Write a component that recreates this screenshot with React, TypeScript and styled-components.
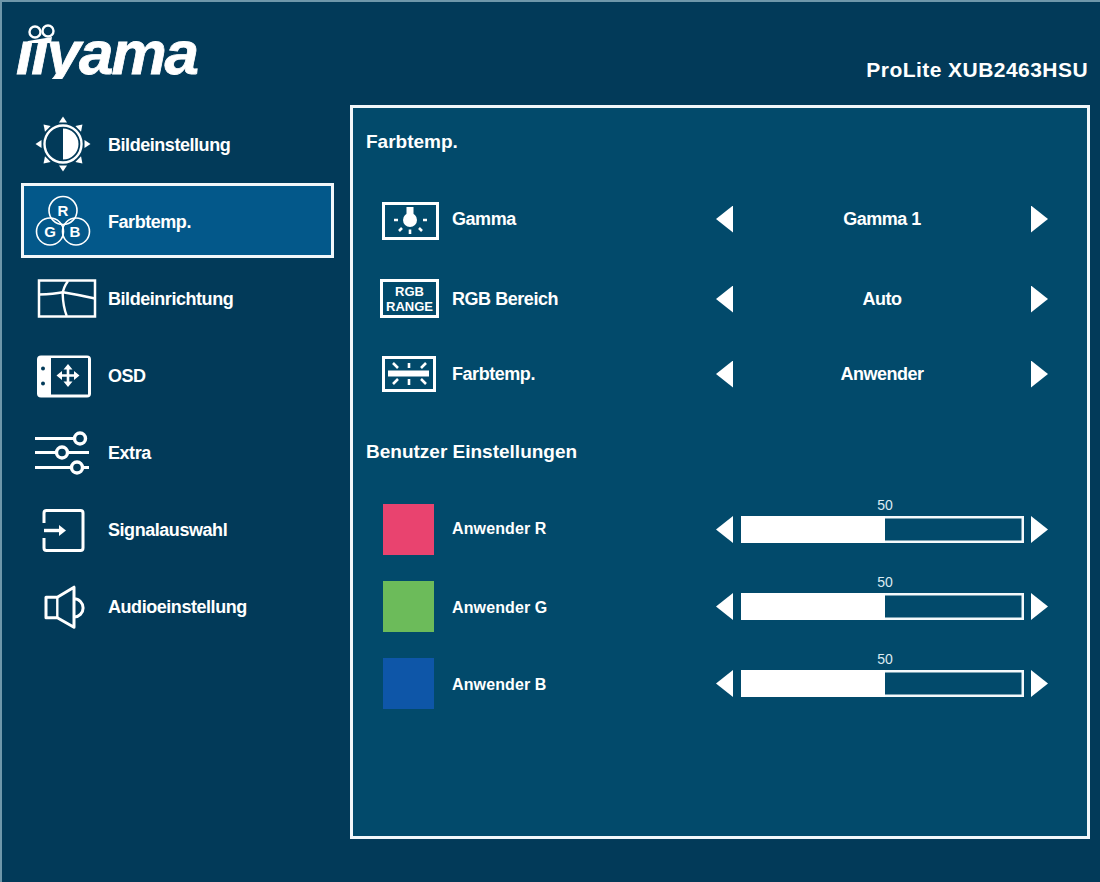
import React from 'react';
import styled, { createGlobalStyle } from 'styled-components';

const FRAME_BG = '#023a59';
const PANEL_BG = '#024a6b';
const ACTIVE_BG = '#03588a';

const GlobalStyle = createGlobalStyle`
  html, body {
    margin: 0;
    padding: 0;
    background: ${FRAME_BG};
  }
  * {
    box-sizing: border-box;
  }
`;

const Frame = styled.div`
  width: 1100px;
  height: 882px;
  overflow: hidden;
  display: flex;
  flex-direction: column;
  background: ${FRAME_BG};
  border-left: 2px solid #6f97aa;
  border-top: 2px solid #6f97aa;
  font-family: "Liberation Sans", Arial, sans-serif;
  color: #fff;
`;

const Header = styled.header`
  height: 103px;
  flex: none;
  display: flex;
  justify-content: space-between;
  align-items: flex-start;
  padding-left: 14px;
  padding-right: 12px;
`;

const Logo = styled.div`
  position: relative;
  margin-top: 20px;
  font-size: 62px;
  line-height: 62px;
  font-weight: 700;
  font-style: italic;
  letter-spacing: -2px;
  padding-right: 4px;
  -webkit-text-stroke: 0.8px #fff;
`;

/* sits on the wordmark: swaps the i dots for the infinity sign, shortens the y tail */
const LogoMark = styled.svg`
  position: absolute;
  left: 0;
  top: 0;
`;

const Model = styled.div`
  margin-top: 55px;
  font-size: 21px;
  line-height: 26px;
  font-weight: 700;
  letter-spacing: 0.45px;
`;

const Body = styled.div`
  flex: 1;
  display: flex;
  align-items: flex-start;
  padding-left: 19px;
  gap: 16px;
`;

const Sidebar = styled.nav`
  width: 313px;
  padding-top: 1px;
  display: flex;
  flex-direction: column;
  gap: 2px;
`;

const NavItem = styled.div<{ $active?: boolean }>`
  height: 75px;
  display: flex;
  align-items: center;
  padding-left: 6px;
  border: 3px solid ${(p) => (p.$active ? '#f2f7fa' : 'transparent')};
  background: ${(p) => (p.$active ? ACTIVE_BG : 'transparent')};
`;

const NavLabel = styled.span`
  margin-left: 8px;
  padding-top: 2px;
  font-size: 18px;
  line-height: 24px;
  font-weight: 700;
  letter-spacing: -0.45px;
`;

const Panel = styled.section`
  width: 740px;
  height: 734px;
  border: 3px solid #f2f7fa;
  background: ${PANEL_BG};
  padding-top: 22px;
  padding-left: 13px;
  padding-right: 39px;
  display: flex;
  flex-direction: column;
`;

const SectionTitle = styled.h2<{ $top?: number }>`
  margin: ${(p) => p.$top ?? 0}px 0 0;
  font-size: 19px;
  line-height: 24px;
  font-weight: 700;
`;

const Row = styled.div<{ $top: number; $height: number }>`
  margin-top: ${(p) => p.$top}px;
  height: ${(p) => p.$height}px;
  display: grid;
  grid-template-columns: 12px 74px 1fr 332px;
  grid-template-rows: minmax(0, 1fr);
  align-items: center;
`;

const IconSlot = styled.div`
  grid-column: 2;
  height: 100%;
`;

const OverflowSvg = styled.svg`
  display: block;
  overflow: visible;
  flex: none;
`;

const Swatch = styled.div<{ $color: string }>`
  width: 51px;
  height: 51px;
  margin-left: 5px;
  background: ${(p) => p.$color};
`;

const RowLabel = styled.span`
  font-size: 18px;
  line-height: 24px;
  font-weight: 700;
  letter-spacing: -0.45px;
`;

const SmallLabel = styled.span<{ $drop: boolean }>`
  padding-${(p) => (p.$drop ? 'top' : 'bottom')}: 2px;
  font-size: 16px;
  line-height: 24px;
  font-weight: 700;
  letter-spacing: 0.12px;
`;

const Selector = styled.div`
  display: flex;
  align-items: center;
  justify-content: space-between;
`;

const Arrow = styled.span<{ $dir: 'left' | 'right' }>`
  width: 17px;
  height: 27px;
  flex: none;
  background: #fff;
  clip-path: ${(p) =>
    p.$dir === 'left'
      ? 'polygon(100% 0, 100% 100%, 0 50%)'
      : 'polygon(0 0, 0 100%, 100% 50%)'};
`;

const SelectorValue = styled.span`
  font-size: 18px;
  line-height: 24px;
  font-weight: 700;
  letter-spacing: -0.5px;
`;

const Slider = styled.div`
  align-self: stretch;
  min-height: 0;
  display: flex;
  flex-direction: column;
  justify-content: flex-end;
  padding-bottom: 12px;
`;

const SliderValue = styled.div`
  flex: none;
  height: 12px;
  margin-bottom: 5px;
  margin-left: 6px;
  text-align: center;
  font-size: 14px;
  line-height: 12px;
  color: #dcebf2;
`;

const SliderBar = styled.div`
  flex: none;
  display: flex;
  align-items: center;
  justify-content: space-between;
`;

const Track = styled.div`
  width: 283px;
  height: 27px;
  box-shadow: inset 0 0 0 2.5px #f4f9fb;
  margin-left: 7px;
  margin-right: 7px;
`;

const TrackFill = styled.div`
  height: 100%;
  background: #fff;
`;

const InfinityMark = () => (
  <LogoMark width="190" height="72" viewBox="0 0 190 72">
    <rect x="0" y="0" width="70" height="18.5" fill={FRAME_BG} />
    <rect x="0" y="57" width="190" height="15" fill={FRAME_BG} />
    <circle cx="19" cy="10" r="5.5" fill="none" stroke="#fff" strokeWidth="2.4" />
    <circle cx="32" cy="9" r="5.5" fill="none" stroke="#fff" strokeWidth="2.4" />
    <path d="M12 19 L36 15 L35 21 L11 21 Z" fill="#fff" />
  </LogoMark>
);

const NavSvg: React.FC<{ children: React.ReactNode }> = ({ children }) => (
  <OverflowSvg width="70" height="60" viewBox="0 0 70 60" fill="none" stroke="#fff" strokeWidth="3">
    {children}
  </OverflowSvg>
);

const SunIcon = () => (
  <NavSvg>
    <circle cx="33" cy="30" r="18.5" strokeWidth="2.4" />
    <path d="M33 14.5 A15.5 15.5 0 0 1 33 45.5 Z" fill="#fff" stroke="none" />
    {[0, 45, 90, 135, 180, 225, 270, 315].map((a) => (
      <polygon
        key={a}
        points="29,8.5 37,8.5 33,2.5"
        fill="#fff"
        stroke="none"
        transform={`rotate(${a} 33 30)`}
      />
    ))}
  </NavSvg>
);

const LetterText = styled.text`
  font-family: "Liberation Sans", Arial, sans-serif;
  font-size: 15px;
  font-weight: 700;
  fill: #fff;
  stroke: none;
  text-anchor: middle;
`;

const RgbIcon = () => (
  <NavSvg>
    <g strokeWidth="1.6">
      <circle cx="33" cy="19.5" r="14" />
      <circle cx="20" cy="40.5" r="13.5" />
      <circle cx="46" cy="40.5" r="13.5" />
    </g>
    <LetterText x="33" y="25">R</LetterText>
    <LetterText x="20" y="46">G</LetterText>
    <LetterText x="45" y="46">B</LetterText>
  </NavSvg>
);

const GeometryIcon = () => (
  <NavSvg>
    <rect x="9" y="12.5" width="56" height="36" strokeWidth="2.5" />
    <path d="M9 26.5 Q24 26 33 24.2 Q50 27 65 30.5" strokeWidth="2.4" />
    <path d="M38 13 Q33 20 32.7 26 Q33 38 36.7 48" strokeWidth="2.4" />
  </NavSvg>
);

const OsdIcon = () => (
  <NavSvg>
    <rect x="7" y="10.5" width="54" height="42" rx="4" fill="#fff" stroke="none" />
    <rect x="21" y="13" width="37" height="36.5" fill={FRAME_BG} stroke="none" />
    <circle cx="13" cy="23.5" r="2" fill={FRAME_BG} stroke="none" />
    <circle cx="13" cy="38.5" r="2" fill={FRAME_BG} stroke="none" />
    <path d="M38 22 V39 M29.5 30.5 H46.5" strokeWidth="2.6" />
    <path d="M38 19 L42.5 24.5 H33.5 Z M38 42 L42.5 36.5 H33.5 Z M26.5 30.5 L32 26 V35 Z M49.5 30.5 L44 26 V35 Z" fill="#fff" stroke="none" />
  </NavSvg>
);

const SlidersIcon = () => (
  <NavSvg>
    <path d="M5 16.5 H44 M38 30.5 H59 M5 30.5 H26 M5 45.5 H41 M53 45.5 H59" />
    <circle cx="50" cy="16.5" r="5.5" strokeWidth="3.4" />
    <circle cx="32" cy="30.5" r="5.5" strokeWidth="3.4" />
    <circle cx="47" cy="45.5" r="5.5" strokeWidth="3.4" />
  </NavSvg>
);

const InputIcon = () => (
  <NavSvg>
    <path d="M14 24 V14 Q14 11.5 16.5 11.5 H50.5 Q53 11.5 53 14 V49 Q53 51.5 50.5 51.5 H16.5 Q14 51.5 14 49 V39" />
    <path d="M14 31.5 H30" strokeWidth="3.4" />
    <path d="M36 31.5 L29 26 V37 Z" fill="#fff" stroke="none" />
  </NavSvg>
);

const SpeakerIcon = () => (
  <NavSvg>
    <path d="M16 21.2 H27.3 L44 11.2 V51.2 L27.3 41.8 H16 Z" strokeLinejoin="round" />
    <path d="M27.3 21.2 V41.8" strokeWidth="2.4" />
    <path d="M44 22.8 A9 9 0 0 1 44 41" />
  </NavSvg>
);

const RowSvg: React.FC<{ children: React.ReactNode }> = ({ children }) => (
  <OverflowSvg width="64" height="40" viewBox="0 0 64 40" fill="none" stroke="#fff" strokeWidth="3">
    {children}
  </OverflowSvg>
);

const GammaIcon = () => (
  <RowSvg>
    <rect x="5.5" y="4.5" width="54" height="35" />
    <circle cx="32" cy="21" r="7" fill="#fff" stroke="none" />
    <rect x="28.5" y="8" width="7" height="10" fill="#fff" stroke="none" />
    <path d="M16 21 H20 M45 21 H49 M32 30.5 V35 M21 32 L24 29 M41 29 L44 32" strokeWidth="2.6" />
  </RowSvg>
);

const RangeText = styled.text`
  font-family: "Liberation Sans", Arial, sans-serif;
  font-size: 13px;
  font-weight: 700;
  fill: #fff;
  stroke: none;
  text-anchor: middle;
`;

const RangeIcon = () => (
  <RowSvg>
    <rect x="3.5" y="1.5" width="56" height="36" />
    <RangeText x="31.5" y="17">RGB</RangeText>
    <RangeText x="31.5" y="32">RANGE</RangeText>
  </RowSvg>
);

const TempIcon = () => (
  <RowSvg>
    <rect x="5.5" y="3.5" width="51" height="33" />
    <rect x="10" y="16.5" width="41" height="6" fill="#fff" stroke="none" />
    <path d="M31 9 V14 M31 25 V31 M15 9 L20 14 M48 9 L43 14 M20 25 L15 30 M43 25 L48 30" strokeWidth="2.6" />
  </RowSvg>
);

const navItems = [
  { label: 'Bildeinstellung', icon: <SunIcon /> },
  { label: 'Farbtemp.', icon: <RgbIcon />, active: true },
  { label: 'Bildeinrichtung', icon: <GeometryIcon /> },
  { label: 'OSD', icon: <OsdIcon /> },
  { label: 'Extra', icon: <SlidersIcon /> },
  { label: 'Signalauswahl', icon: <InputIcon /> },
  { label: 'Audioeinstellung', icon: <SpeakerIcon /> },
];

const selectRows = [
  { label: 'Gamma', value: 'Gamma 1', icon: <GammaIcon />, top: 45 },
  { label: 'RGB Bereich', value: 'Auto', icon: <RangeIcon />, top: 40 },
  { label: 'Farbtemp.', value: 'Anwender', icon: <TempIcon />, top: 35 },
];

const userRows = [
  { label: 'Anwender R', color: '#e9436f', value: 50, top: 40, drop: false },
  { label: 'Anwender G', color: '#6cbb5a', value: 50, top: 26, drop: true },
  { label: 'Anwender B', color: '#0e56a8', value: 50, top: 26, drop: true },
];

const App: React.FC = () => {
  return (
    <Frame>
      <GlobalStyle />
      <Header>
        <Logo>
          iiyama
          <InfinityMark />
        </Logo>
        <Model>ProLite XUB2463HSU</Model>
      </Header>
      <Body>
        <Sidebar>
          {navItems.map((item) => (
            <NavItem key={item.label} $active={item.active}>
              {item.icon}
              <NavLabel>{item.label}</NavLabel>
            </NavItem>
          ))}
        </Sidebar>
        <Panel>
          <SectionTitle>Farbtemp.</SectionTitle>
          {selectRows.map((row) => (
            <Row key={row.label} $top={row.top} $height={40}>
              <IconSlot>{row.icon}</IconSlot>
              <RowLabel>{row.label}</RowLabel>
              <Selector>
                <Arrow $dir="left" />
                <SelectorValue>{row.value}</SelectorValue>
                <Arrow $dir="right" />
              </Selector>
            </Row>
          ))}
          <SectionTitle $top={46}>Benutzer Einstellungen</SectionTitle>
          {userRows.map((row) => (
            <Row key={row.label} $top={row.top} $height={51}>
              <IconSlot>
                <Swatch $color={row.color} />
              </IconSlot>
              <SmallLabel $drop={row.drop}>{row.label}</SmallLabel>
              <Slider>
                <SliderValue>{row.value}</SliderValue>
                <SliderBar>
                  <Arrow $dir="left" />
                  <Track>
                    <TrackFill style={{ width: `${row.value * 1.02}%` }} />
                  </Track>
                  <Arrow $dir="right" />
                </SliderBar>
              </Slider>
            </Row>
          ))}
        </Panel>
      </Body>
    </Frame>
  );
};

export default App;
